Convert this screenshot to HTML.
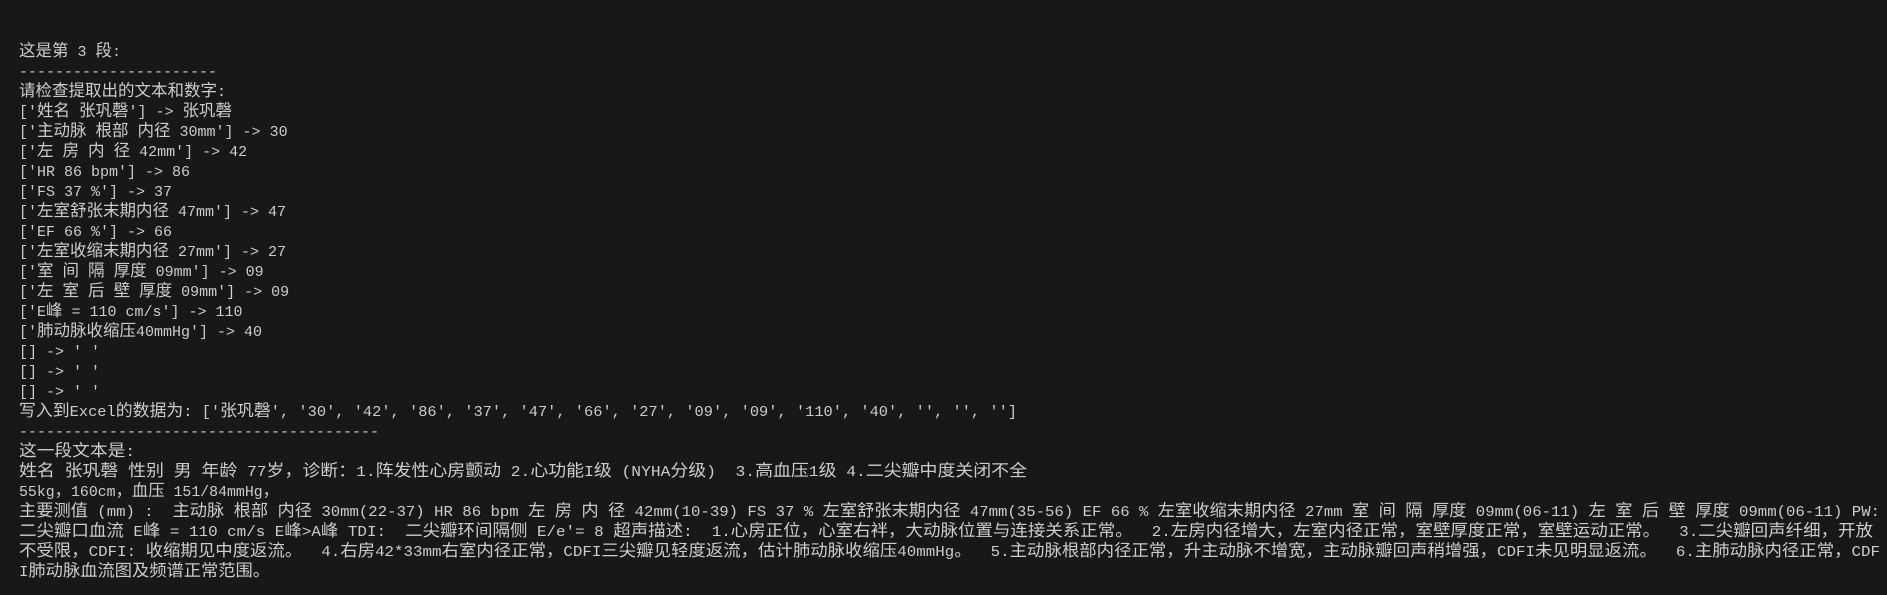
<!DOCTYPE html>
<html><head><meta charset="utf-8">
<style>
html,body{margin:0;padding:0;background:#181818;width:1887px;height:595px;overflow:hidden}
#t{position:absolute;left:19px;top:43px;color:#cccccc;font-family:"Liberation Mono","Noto Sans CJK SC",monospace;font-size:15px;line-height:20px}
#t div{height:20px;white-space:pre;overflow:visible}
#t div > span.w{display:block;width:max-content;height:20px;line-height:20px;transform-origin:0 0}
.c{font-family:"Noto Sans CJK SC","Liberation Sans",sans-serif;font-size:16.5px;line-height:0;vertical-align:baseline}
</style></head><body>
<div id="t"><div>这是第 3 段:</div><div>----------------------</div><div>请检查提取出的文本和数字:</div><div>['姓名 张巩磬'] -> 张巩磬</div><div>['主动脉 根部 内径 30mm'] -> 30</div><div>['左 房 内 径 42mm'] -> 42</div><div>['HR 86 bpm'] -> 86</div><div>['FS 37 %'] -> 37</div><div>['左室舒张末期内径 47mm'] -> 47</div><div>['EF 66 %'] -> 66</div><div>['左室收缩末期内径 27mm'] -> 27</div><div>['室 间 隔 厚度 09mm'] -> 09</div><div>['左 室 后 壁 厚度 09mm'] -> 09</div><div>['E峰 = 110 cm/s'] -> 110</div><div>['肺动脉收缩压40mmHg'] -> 40</div><div>[] -> ' '</div><div>[] -> ' '</div><div>[] -> ' '</div><div data-w="1017">写入到Excel的数据为: ['张巩磬', '30', '42', '86', '37', '47', '66', '27', '09', '09', '110', '40', '', '', '']</div><div data-w="379">----------------------------------------</div><div data-w="135">这一段文本是:</div><div data-w="1027">姓名 张巩磬 性别 男 年龄 77岁，诊断：1.阵发性心房颤动 2.心功能I级 (NYHA分级)  3.高血压1级 4.二尖瓣中度关闭不全</div><div data-w="279">55kg，160cm，血压 151/84mmHg，</div><div data-w="1880">主要测值 (mm) :  主动脉 根部 内径 30mm(22-37) HR 86 bpm 左 房 内 径 42mm(10-39) FS 37 % 左室舒张末期内径 47mm(35-56) EF 66 % 左室收缩末期内径 27mm 室 间 隔 厚度 09mm(06-11) 左 室 后 壁 厚度 09mm(06-11) PW:</div><div data-w="1873">二尖瓣口血流 E峰 = 110 cm/s E峰>A峰 TDI:  二尖瓣环间隔侧 E/e'= 8 超声描述:  1.心房正位，心室右袢，大动脉位置与连接关系正常。  2.左房内径增大，左室内径正常，室壁厚度正常，室壁运动正常。  3.二尖瓣回声纤细，开放</div><div data-w="1880">不受限，CDFI: 收缩期见中度返流。  4.右房42*33mm右室内径正常，CDFI三尖瓣见轻度返流，估计肺动脉收缩压40mmHg。  5.主动脉根部内径正常，升主动脉不增宽，主动脉瓣回声稍增强，CDFI未见明显返流。  6.主肺动脉内径正常，CDF</div><div data-w="270">I肺动脉血流图及频谱正常范围。</div></div>
<script>
document.querySelectorAll('#t div').forEach(function(d){
  var s=d.textContent;
  var h=s.replace(/&/g,'&amp;').replace(/</g,'&lt;').replace(/>/g,'&gt;')
   .replace(/([\u3000-\u9fff\uff00-\uffef]+)/g,'<span class="c">$1</span>');
  d.innerHTML='<span class="w">'+h+'</span>';
  var tw=d.getAttribute('data-w');
  if(tw){
    var sp=d.firstChild;
    var w=sp.getBoundingClientRect().width;
    var target=parseFloat(tw)-19;
    if(w>0) sp.style.transform='scaleX('+(target/w)+')';
  }
});
</script>
</body></html>
